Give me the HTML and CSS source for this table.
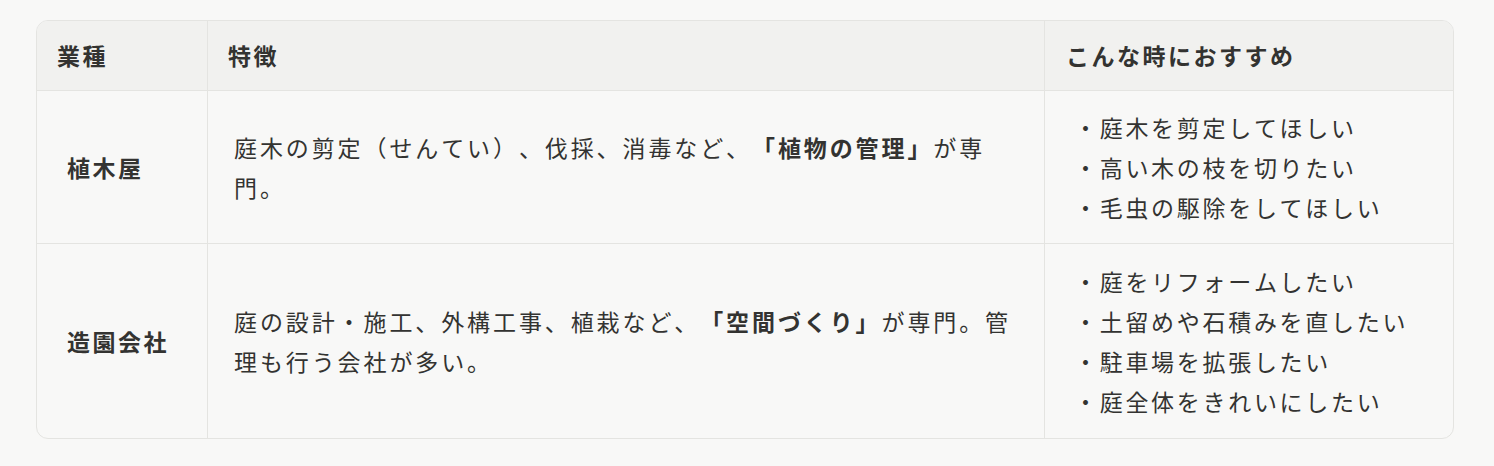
FILE: index.html
```html
<!DOCTYPE html>
<html lang="ja">
<head>
<meta charset="utf-8">
<link rel="stylesheet" href="styles.css">
</head>
<body>
<div class="wrap">
<table class="tbl">
  <colgroup>
    <col class="c1"><col class="c2"><col class="c3">
  </colgroup>
  <thead>
    <tr><th>業種</th><th>特徴</th><th>こんな時におすすめ</th></tr>
  </thead>
  <tbody>
    <tr>
      <td class="name">植木屋</td>
      <td class="feat">庭木の剪定（せんてい）、伐採、消毒など、<strong>「植物の管理」</strong>が専門。</td>
      <td class="rec">
        <ul>
          <li>・庭木を剪定してほしい</li>
          <li>・高い木の枝を切りたい</li>
          <li>・毛虫の駆除をしてほしい</li>
        </ul>
      </td>
    </tr>
    <tr class="tall">
      <td class="name">造園会社</td>
      <td class="feat">庭の設計・施工、外構工事、植栽など、<strong>「空間づくり」</strong>が専門。管理も行う会社が多い。</td>
      <td class="rec">
        <ul>
          <li>・庭をリフォームしたい</li>
          <li>・土留めや石積みを直したい</li>
          <li>・駐車場を拡張したい</li>
          <li>・庭全体をきれいにしたい</li>
        </ul>
      </td>
    </tr>
  </tbody>
</table>
</div>
</body>
</html>
```
FILE: styles.css
```css
html, body {
  margin: 0;
  padding: 0;
  background: #f8f8f7;
}
body {
  font-family: "Noto Sans CJK JP", "Noto Sans", sans-serif;
  color: #333331;
  font-size: 23px;
  letter-spacing: 2.5px;
  text-spacing-trim: space-all;
  font-kerning: none;
}
.wrap {
  padding: 20px 41px 0 36px;
}
.tbl {
  width: 1417px;
  border-collapse: separate;
  border-spacing: 0;
  border: 1px solid #e4e4e1;
  border-radius: 12px;
  overflow: hidden;
  table-layout: fixed;
}
.c1 { width: 170px; }
.c2 { width: 837px; }
.c3 { width: 409px; }
.tbl th {
  background: #f1f1ef;
  text-align: left;
  font-weight: 700;
  line-height: 40px;
  padding: 14px 20px 15px 20px;
  border-bottom: 1px solid #e4e4e1;
}
.tbl th + th, .tbl td + td {
  border-left: 1px solid #e4e4e1;
}
.tbl td {
  vertical-align: middle;
  line-height: 40px;
  padding: 16px 30px;
}
.tbl tr.tall td {
  padding-top: 17px;
  padding-bottom: 17px;
}
.tbl tbody tr + tr td {
  border-top: 1px solid #e4e4e1;
}
.tbl th:last-child { padding-left: 21px; }
.name { font-weight: 700; }
.tbl td.feat {
  padding-left: 26px;
  padding-right: 28px;
  letter-spacing: 2.9px;
}
.feat strong { font-weight: 700; }
.tbl td.rec {
  padding-left: 29px;
  padding-right: 16px;
  letter-spacing: 2.7px;
}
.rec ul {
  list-style: none;
  margin: 0;
  padding: 0;
}
```
